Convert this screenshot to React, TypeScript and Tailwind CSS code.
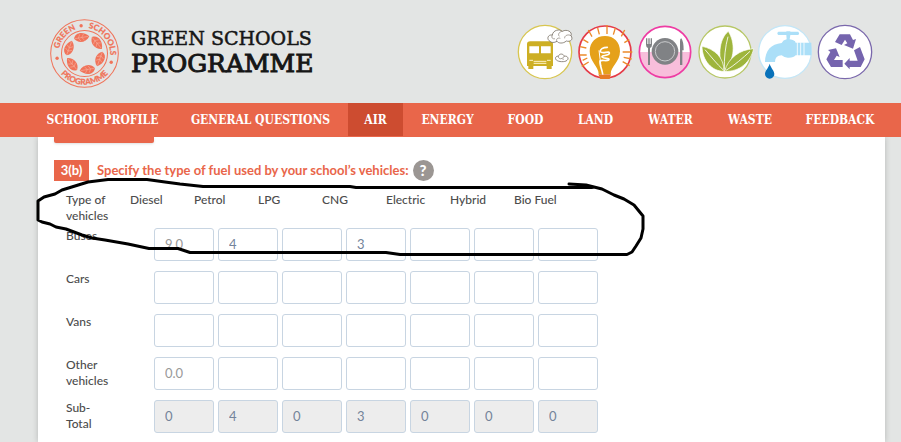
import type { ReactNode } from "react";

const SEAL_TEXT = "font-['Lato',sans-serif] font-black";

function Leaf({ angle }: { angle: number }) {
  return (
    <g transform={`rotate(${angle} 102 102)`}>
      <path d="M79 54 C85 36 109 36 125 54 C113 71 89 71 79 54Z" fill="#f0745a" />
      <path d="M80 54 L122 54 M92 54 L98 44 M102 54 L109 45 M92 54 L98 64 M102 54 L109 63" stroke="#f6b5a5" strokeWidth="1.6" fill="none" />
    </g>
  );
}

function Seal() {
  return (
    <svg viewBox="0 0 204 204" className="size-[69px] shrink-0" aria-label="Green Schools Programme seal">
      <defs>
        <path id="arc-top" d="M26 102 A76 76 0 0 1 178 102 A76 76 0 0 1 168 140" />
        <path id="arc-bottom" d="M10 102 A92 92 0 0 0 194 102" />
      </defs>
      <circle cx="102" cy="102" r="100" fill="none" stroke="#f0745a" strokeWidth="3" />
      <circle cx="102" cy="102" r="68" fill="none" stroke="#f0745a" strokeWidth="3" />
      {[0, 60, 120, 180, 240, 300].map((a) => (
        <Leaf key={a} angle={a - 10} />
      ))}
      <g fontSize="24" fill="#f0745a" stroke="#f0745a" strokeWidth="0.6">
        <text className={SEAL_TEXT}>
          <textPath href="#arc-top" startOffset="14">GREEN</textPath>
        </text>
        <text className={SEAL_TEXT}>
          <textPath href="#arc-top" startOffset="131">SCHOOLS</textPath>
        </text>
        <text className={SEAL_TEXT}>
          <textPath href="#arc-bottom" startOffset="50%" textAnchor="middle">PROGRAMME</textPath>
        </text>
      </g>
      <circle cx="92" cy="20" r="5" fill="#f0745a" />
      <circle cx="21" cy="116" r="5" fill="#f0745a" />
      <circle cx="181" cy="128" r="5" fill="#f0745a" />
    </svg>
  );
}

function Topic({ label, box, children }: { label: string; box: string; children: ReactNode }) {
  return (
    <a href="#" aria-label={label} className="block">
      <svg viewBox={box} className="size-[60px]">
        {children}
      </svg>
    </a>
  );
}

function TopicIcons() {
  return (
    <div className="flex shrink-0">
      <Topic label="Air" box="14 18 180 180">
        <circle cx="104" cy="108" r="80" fill="#fff" stroke="#d8c650" strokeWidth="4" />
        <path d="M50 84 Q50 76 60 76 H118 Q128 76 128 84 V150 H124 V159 H109 V150 H69 V159 H54 V150 H50Z" fill="#cdaf24" />
        <path d="M57 91 H86 V112 H57Z M92 91 H121 V112 H92Z" fill="#fff" />
        <path d="M57 133 H68 M110 133 H121 M70 136 H108 M70 142 H108" stroke="#fff3c8" strokeWidth="3" />
        <g fill="#fff" stroke="#7b7268" strokeWidth="2.500">
          <path d="M119 76 C108 70 112 55 126 57 C128 42 148 38 156 46 C170 38 187 48 182 59 C190 70 180 79 168 75 C158 84 144 82 140 76 C132 81 122 80 119 76Z" />
          <path d="M126 57 C122 66 128 70 134 68 M156 46 C146 47 142 56 147 61 M182 59 C174 54 162 58 163 67 M140 76 C136 70 142 64 150 67" fill="none" strokeWidth="2" />
          <path d="M138 132 C132 126 138 119 144 121 C147 111 160 113 162 121 C171 118 177 128 170 133 C164 139 144 138 138 132Z" />
          <path d="M144 121 C144 128 150 130 155 127 M162 121 C156 123 156 130 160 132" fill="none" strokeWidth="2" />
        </g>
      </Topic>
      <Topic label="Energy" box="194 18 180 180">
        <circle cx="284" cy="108" r="78" fill="#fff" stroke="#e53b48" strokeWidth="5" />
        <path
          d="M290 27 V54 M234 42 L245 62 M343 42 L333 61 M315 36 L309 56 M262 36 L267 55 M219 71 L234 80 M357 71 L342 80 M209 92 L228 96 M366 108 H337 M208 117 H229 M214 151 L235 138 M217 133 L231 126 M358 149 L337 137 M364 129 L340 124"
          stroke="#ec8a2a"
          strokeWidth="4"
        />
        <path d="M265 174 C265 151 238 138 238 106 C238 78 257 60 284 60 C311 60 329 78 329 106 C329 138 301 151 301 174Z" fill="#e5a11a" />
        <path d="M264 175 H302 L298 189 H270Z" fill="#e77b24" />
        <path d="M291 94 C277 94 269 100 270 107 C275 115 299 103 297 112 C295 120 273 117 275 123 C281 130 300 124 295 132 C287 137 275 130 269 135 C267 145 275 160 277 174" fill="none" stroke="#fff" strokeWidth="5" strokeLinecap="round" />
        <path d="M266 103 L272 151" stroke="#fff" strokeWidth="3" />
      </Topic>
      <Topic label="Food" box="1 18 180 180">
        <circle cx="91" cy="108" r="77" fill="#fff" />
        <path d="M14 108 H168 A77 77 0 0 1 14 108Z" fill="#f8bedb" />
        <circle cx="91" cy="108" r="77" fill="none" stroke="#ee3ca3" strokeWidth="5" />
        <g fill="#808285">
          <circle cx="91" cy="106" r="40" />
          <path d="M34 67 H38 V84 H41 V67 H45 V84 H48 V67 H52 V86 Q52 94 46 96 V147 H40 V96 Q34 94 34 86Z" />
          <path d="M136 147 V76 Q136 67 140 67 Q147 76 147 103 H143 V147Z" />
        </g>
        <circle cx="91" cy="106" r="29" fill="none" stroke="#c9cacc" strokeWidth="3" />
      </Topic>
      <Topic label="Land" box="175 18 180 180">
        <circle cx="265" cy="108" r="78" fill="#fff" stroke="#b7c765" strokeWidth="4" />
        <g fill="#9eb53c" stroke="#fff" strokeWidth="2">
          <path d="M262 164 C243 130 245 70 275 46 C296 80 296 130 262 164Z" />
          <path d="M262 166 C226 166 197 135 196 91 C234 99 262 124 262 166Z" />
          <path d="M264 166 C274 126 309 101 351 98 C342 138 309 168 264 166Z" />
        </g>
        <path d="M263 160 C262 130 266 90 274 62 M260 162 C242 146 220 118 205 101 M268 163 C291 150 321 124 340 106" fill="none" stroke="#fff" strokeWidth="2.500" />
      </Topic>
      <Topic label="Water" box="12 18 180 180">
        <circle cx="102" cy="108" r="79" fill="#fff" stroke="#c3e6f7" strokeWidth="4" />
        <path
          d="M82 47 H106 V46 H118 V47 H142 Q147 52 142 57 H118 L116 70 Q132 72 134 80 H181 V118 H134 Q128 126 110 125 Q100 125 92 118 Q72 118 72 138 H42 C42 104 60 84 92 81 Q96 72 107 70 L106 57 H82 Q76 52 82 47Z"
          fill="#abdff8"
        />
        <path d="M139 79 V120 M149 79 V120 M159 79 V120" stroke="#fff" strokeWidth="2.500" />
        <path d="M56 143 C60 157 70 164 70 174 A14 14 0 0 1 42 174 C42 164 52 157 56 143Z" fill="#0872ba" />
      </Topic>
      <Topic label="Waste" box="197 18 180 180">
        <circle cx="287" cy="108" r="80" fill="#fff" stroke="#7a68ac" strokeWidth="4" />
        <g fill="#7564ae">
          <path d="M271 55 H302 L311 72 L320 69 L311 98 L284 87 L294 82 L287 71 L277 87 L257 78Z" />
          <path d="M314 103 L332 93 L346 130 L334 153 H301 V160 L285 143 L301 126 V134 H325Z" />
          <path d="M236 102 L260 97 L271 123 L262 119 L254 132 H280 V153 H245 L231 130 L243 108Z" />
        </g>
      </Topic>
    </div>
  );
}

const NAV = ["SCHOOL PROFILE", "GENERAL QUESTIONS", "AIR", "ENERGY", "FOOD", "LAND", "WATER", "WASTE", "FEEDBACK"];
const FUELS = ["Diesel", "Petrol", "LPG", "CNG", "Electric", "Hybrid", "Bio Fuel"];
const ROWS = [
  { label: "Buses", values: ["9.0", "4", "", "3", "", "", ""] },
  { label: "Cars", values: ["", "", "", "", "", "", ""] },
  { label: "Vans", values: ["", "", "", "", "", "", ""] },
  { label: "Other vehicles", values: ["0.0", "", "", "", "", "", ""] },
  { label: "Sub-Total", values: ["0", "4", "0", "3", "0", "0", "0"], total: true },
];

function FuelTable() {
  return (
    <table className="mt-[11px] ml-3 block text-[12px] leading-4 text-[#4c4c4c]">
      <thead className="block">
        <tr className="flex h-9">
          <th scope="col" className="w-16 pr-2 text-left font-medium">Type of vehicles</th>
          {FUELS.map((f) => (
            <th key={f} scope="col" className="w-16 text-left font-medium">{f}</th>
          ))}
        </tr>
      </thead>
      <tbody className="flex flex-col gap-[10px]">
        {ROWS.map((row) => (
          <tr key={row.label} className="flex gap-1">
            <th scope="row" className="w-[84px] pr-9 text-left font-medium">{row.label}</th>
            {row.values.map((v, i) => (
              <td key={FUELS[i]}>
                <input
                  type="text"
                  aria-label={`${row.label} ${FUELS[i]}`}
                  defaultValue={v}
                  readOnly={row.total}
                  className={`block h-[33px] w-[60px] rounded-[3px] border border-[#c8d5e2] px-[10px] pb-0.5 text-[13px] ${
                    row.total ? "bg-[#ededed] text-[#74849a]" : v.includes(".") ? "bg-white text-[#999]" : "bg-white text-[#74849a]"
                  }`}
                />
              </td>
            ))}
          </tr>
        ))}
      </tbody>
    </table>
  );
}

function Annotation() {
  return (
    <svg viewBox="0 0 901 442" className="pointer-events-none absolute top-0 left-0 h-[442px] w-[901px]" aria-hidden="true">
      <path
        d="M569 184 L586 185 L602 189 L614 195 L624 199 L634 205 L643 216 V229 L641 238 L636 246 L632 252 L627 254.500 H400 L386 252.500 H190 L178 248.500 H149 L128 244 L105 240 L92 238 L82 235 L66 229 L56 227 L50 224 L42 222 L38 220 V201 L44 197 L55 194 L62 190 L75 186 L88 182 L108 179.500 H147 L165 182 L180 184 L203 186.500 H350 L356 187.500 H592"
        fill="none"
        stroke="#000"
        strokeWidth="3"
        strokeLinecap="round"
        strokeLinejoin="round"
      />
    </svg>
  );
}

export default function App() {
  return (
    <div className="relative min-h-screen overflow-hidden bg-[#e3e5e4] font-['Lato',sans-serif]">
      <header className="flex h-[103px] items-center justify-between pr-[26px] pl-[50px]">
        <a href="#" className="flex items-center gap-3 pt-1 text-[#161616]">
          <Seal />
          <span className="block pb-1 font-['DejaVu_Serif',serif] whitespace-nowrap">
            <span className="block text-[19px] leading-6 [-webkit-text-stroke:0.5px_#161616]">GREEN SCHOOLS</span>
            <span className="block text-[25px] leading-7 [-webkit-text-stroke:1px_#161616]">PROGRAMME</span>
          </span>
        </a>
        <TopicIcons />
      </header>

      <nav className="bg-[#e9664a] pr-[10px] pb-px pl-8">
        <ul className="grid grid-cols-[143fr_173fr_57fr_87fr_69fr_71fr_79fr_80fr_100fr]">
          {NAV.map((n) => (
            <li key={n} className="pr-0.5">
              <a
                href="#"
                className={`block h-[33px] text-center font-['DejaVu_Serif_Condensed','DejaVu_Serif',serif] text-[12px] leading-[34px] font-bold whitespace-nowrap text-white ${
                  n === "AIR" ? "bg-[#cd4c30]" : ""
                }`}
              >
                {n}
              </a>
            </li>
          ))}
        </ul>
      </nav>

      <main className="mr-4 ml-[38px] min-h-[305px] bg-white px-4 pb-[9px] shadow-[0_0_6px_rgba(0,0,0,0.2)] [clip-path:inset(0_-8px)]">
        <div className="h-1.5 w-[100px] rounded-b-[2px] bg-[#e9664a] shadow-sm" />
        <div className="mt-[17px] flex h-[21px] items-center text-[13px] font-bold text-[#e9664a]">
          <span className="flex h-full w-[35px] items-center justify-center bg-[#e9664a] text-white">3(b)</span>
          <h2 className="ml-2">Specify the type of fuel used by your school’s vehicles:</h2>
          <button type="button" aria-label="Help" className="ml-1 size-[21px] rounded-full bg-[#9b9693] text-[15px] leading-[21px] font-black text-white">
            ?
          </button>
        </div>
        <FuelTable />
      </main>
      <Annotation />
    </div>
  );
}
